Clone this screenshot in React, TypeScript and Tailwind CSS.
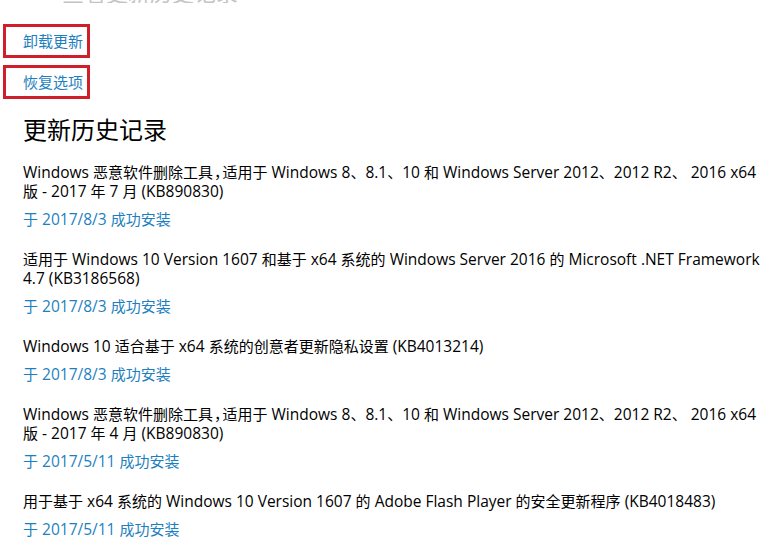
const updates = [
  {
    lines: [
      "Windows 恶意软件删除工具，适用于 Windows 8、8.1、10 和 Windows Server 2012、2012 R2、 2016 x64",
      "版 - 2017 年 7 月 (KB890830)",
    ],
    status: "于 2017/8/3 成功安装",
  },
  {
    lines: [
      "适用于 Windows 10 Version 1607 和基于 x64 系统的 Windows Server 2016 的 Microsoft .NET Framework",
      "4.7 (KB3186568)",
    ],
    status: "于 2017/8/3 成功安装",
  },
  {
    lines: ["Windows 10 适合基于 x64 系统的创意者更新隐私设置 (KB4013214)"],
    status: "于 2017/8/3 成功安装",
  },
  {
    lines: [
      "Windows 恶意软件删除工具，适用于 Windows 8、8.1、10 和 Windows Server 2012、2012 R2、 2016 x64",
      "版 - 2017 年 4 月 (KB890830)",
    ],
    status: "于 2017/5/11 成功安装",
  },
  {
    lines: ["用于基于 x64 系统的 Windows 10 Version 1607 的 Adobe Flash Player 的安全更新程序 (KB4018483)"],
    status: "于 2017/5/11 成功安装",
  },
];

// latin glyphs sit a touch larger than the han ones in the original UI font
function Mixed({ text }: { text: string }) {
  const parts = text.split(/(，|[\u3000-\u9fff\uff01-\uff0b\uff0d-\uffef]+)/).filter(Boolean);
  return (
    <>
      {parts.map((p, i) =>
        p === "，" ? (
          <span key={i} className="px-[1px] text-[15px] [font-feature-settings:'halt']">
            {p}
          </span>
        ) : /[\u3000-\u9fff\uff00-\uffef]/.test(p) ? (
          <span key={i} className="text-[15px]">
            {p}
          </span>
        ) : (
          <span key={i} className="text-[15.5px]">
            {p}
          </span>
        )
      )}
    </>
  );
}

const font = { fontFamily: '"Open Sans", "Noto Sans CJK SC", sans-serif' };

export default function App() {
  return (
    <div className="h-[538px] w-[781px] overflow-hidden bg-white text-black" style={font}>
      {/* page title, scrolled mostly out of view */}
      <div className="flex h-[3px] items-end overflow-hidden pl-[62px]">
        <span className="text-[22px] leading-none text-[#c4c4c4]">查看更新历史记录</span>
      </div>

      <div className="mt-[21px] flex flex-col gap-[7px] pl-[3px]">
        <div className="flex h-[34px] w-[87px] items-center border-[3px] border-[#cf1f2a] pl-[17px]">
          <a className="text-[15px] leading-none text-[#1e7fc0]">卸载更新</a>
        </div>
        <div className="flex h-[34px] w-[87px] items-center border-[3px] border-[#cf1f2a] pl-[17px]">
          <a className="text-[15px] leading-none text-[#1e7fc0]">恢复选项</a>
        </div>
      </div>

      <div className="pl-[23px]">
        <h2 className="mt-[15px] text-[24px] leading-[32px] font-normal">更新历史记录</h2>

        <ul className="mt-[17px] flex flex-col gap-[21px]">
          {updates.map((u, i) => (
            <li key={i} className="flex flex-col">
              {u.lines.map((line) => (
                <div key={line} className="h-[19px] whitespace-nowrap leading-[19px]">
                  <Mixed text={line} />
                </div>
              ))}
              <a className="mt-[9px] h-[19px] whitespace-nowrap leading-[19px] text-[#1e7fc0]">
                <Mixed text={u.status} />
              </a>
            </li>
          ))}
        </ul>
      </div>
    </div>
  );
}
